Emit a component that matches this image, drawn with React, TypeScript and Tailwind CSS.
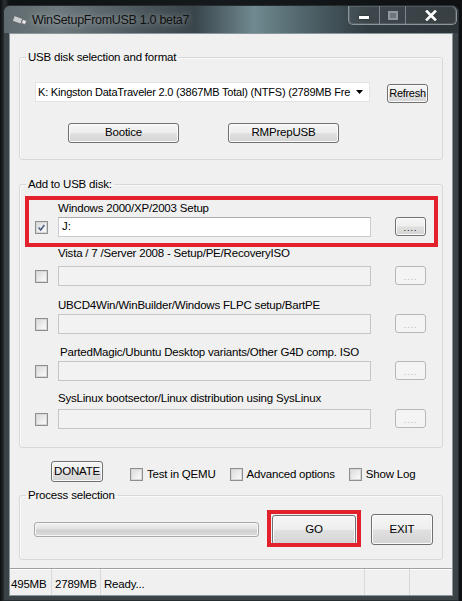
import type { ReactNode } from "react";

const font = { fontFamily: '"Liberation Sans", Arial, sans-serif' };

const entries = [
  { label: "Windows 2000/XP/2003 Setup", value: "J:", on: true, mt: "mt-[10px]", gap: "mt-[2px]", indent: "" },
  { label: "Vista / 7 /Server 2008 - Setup/PE/RecoveryISO", value: "", on: false, mt: "mt-[9px]", gap: "mt-[6px]", indent: "" },
  { label: "UBCD4Win/WinBuilder/Windows FLPC setup/BartPE", value: "", on: false, mt: "mt-[12px]", gap: "mt-[2px]", indent: "" },
  { label: "PartedMagic/Ubuntu Desktop variants/Other G4D comp. ISO", value: "", on: false, mt: "mt-[11px]", gap: "mt-[2px]", indent: "pl-[2px]" },
  { label: "SysLinux bootsector/Linux distribution using SysLinux", value: "", on: false, mt: "mt-[10px]", gap: "mt-[4px]", indent: "" },
];

function Button({ children, className = "" }: { children: ReactNode; className?: string }) {
  return (
    <div
      className={`flex items-center justify-center rounded-[3px] border border-[#707070] bg-[linear-gradient(180deg,#f5f5f5_0%,#eeeeee_48%,#e0e0e0_52%,#d4d4d4_100%)] text-black shadow-[inset_0_0_0_1px_#fbfbfb] ${className}`}
    >
      {children}
    </div>
  );
}

function Checkbox({ checked = false }: { checked?: boolean }) {
  return (
    <div className="flex h-[13px] w-[13px] shrink-0 items-center justify-center border border-[#8e8f8f] bg-white">
      <div className="flex h-[11px] w-[11px] items-center justify-center border border-[#d6d6d6] bg-[linear-gradient(135deg,#dcdcdc,#fafafa)]">
        {checked && (
          <svg width="11" height="11" viewBox="0 0 11 11">
            <path d="M2 5.5 L4.5 8.5 L9 2.5" fill="none" stroke="#4b5d85" strokeWidth="1.8" />
          </svg>
        )}
      </div>
    </div>
  );
}

function Group({ title, children, className = "" }: { title: string; children: ReactNode; className?: string }) {
  return (
    <fieldset className={`rounded-[3px] border border-[#d3d9dd] px-[6px] shadow-[inset_1px_1px_0_#fafafa] ${className}`}>
      <legend className="px-[2px] text-[11.5px] leading-[14px] tracking-[-0.2px]">{title}</legend>
      {children}
    </fieldset>
  );
}

export default function App() {
  return (
    <div
      className="h-[601px] w-[462px] overflow-hidden bg-[linear-gradient(90deg,#0d0f10_0%,#2a3033_1%,#0f1213_2%,#15191b_50%,#0e1011_100%)] pl-[3px] pt-[5px] text-black"
      style={font}
    >
      <div className="flex h-[596px] w-[456px] flex-col overflow-hidden rounded-t-[7px] border border-[#262d31] bg-[#3b4347] shadow-[inset_0_1px_0_rgba(255,255,255,0.35)]">
        {/* title bar */}
        <div className="flex h-[27px] shrink-0 items-start bg-[linear-gradient(90deg,#5f6a6e_0%,#6c787c_12%,#4b575c_30%,#39454a_42%,#6f8a90_55%,#50656b_66%,#313c41_80%,#2c3438_100%)]">
          <div className="ml-[8px] mt-[9px] flex h-[12px] w-[16px] items-center">
            <svg width="16" height="12" viewBox="0 0 16 12">
              <rect x="1" y="2" width="9" height="6" rx="1" transform="rotate(20 6 5)" fill="#c9cdcf" stroke="#5b5f61" strokeWidth="0.8" />
              <rect x="10" y="5" width="4" height="4" transform="rotate(20 12 7)" fill="#e8e8e8" stroke="#6b6f71" strokeWidth="0.6" />
            </svg>
          </div>
          <div className="ml-[4px] mt-[6px] text-[12.5px] leading-[16px] tracking-[-0.3px] text-[#111] [text-shadow:0_0_6px_rgba(255,255,255,0.55)]">
            WinSetupFromUSB 1.0 beta7
          </div>
          <div className="ml-auto mr-[1px] flex h-[19px] overflow-hidden rounded-b-[5px] rounded-tr-[6px] border border-t-0 border-[#8c9599] bg-[rgba(255,255,255,0.06)] shadow-[inset_0_0_0_1px_rgba(255,255,255,0.12)]">
            <div className="flex w-[31px] items-center justify-center border-r border-[#7c8589]">
              <div className="mt-[4px] h-[3px] w-[10px] bg-white shadow-[0_0_2px_#222]" />
            </div>
            <div className="flex w-[26px] items-center justify-center border-r border-[#7c8589]">
              <div className="h-[9px] w-[10px] border-[2px] border-[#8f989c] bg-[#6d777b]" />
            </div>
            <div className="flex w-[50px] items-center justify-center">
              <svg width="12" height="11" viewBox="0 0 12 11">
                <path d="M2 1.5 L10 9.5 M10 1.5 L2 9.5" stroke="#fff" strokeWidth="2.6" strokeLinecap="square" />
              </svg>
            </div>
          </div>
        </div>

        {/* frame body */}
        <div className="flex flex-1 flex-col px-[5px] pb-[4px]">
          <div className="flex flex-1 flex-col border border-[#8a969e] bg-[#f0f0f0] px-[9px]">
            <Group title="USB disk selection and format" className="mt-[16px]">
              <div className="pb-[16px] pl-[9px] pt-[18px]">
                <div className="flex items-start">
                  <div className="flex h-[20px] w-[335px] items-center border border-[#e2e3e4] bg-white pl-[2px]">
                    <div className="whitespace-nowrap text-[11px] tracking-[-0.2px]">
                      K: Kingston DataTraveler 2.0 (3867MB Total) (NTFS) (2789MB Fre
                    </div>
                    <svg className="ml-auto mr-[6px] shrink-0" width="7" height="4" viewBox="0 0 7 4">
                      <path d="M0 0 H7 L3.5 4 Z" fill="#000" />
                    </svg>
                  </div>
                  <Button className="ml-[17px] mt-[2px] h-[19px] w-[41px] text-[11px] tracking-[-0.3px]">Refresh</Button>
                </div>
                <div className="mt-[20px] flex">
                  <Button className="ml-[33px] h-[20px] w-[111px] text-[11.5px] tracking-[-0.2px]">Bootice</Button>
                  <Button className="ml-[49px] h-[20px] w-[111px] text-[11.5px] tracking-[-0.2px]">RMPrepUSB</Button>
                </div>
              </div>
            </Group>

            <Group title="Add to USB disk:" className="mt-[17px]">
              <div className="pb-[18px] pl-[9px]">
                {entries.map((e) => (
                  <div key={e.label} className={`relative ${e.mt}`}>
                    <div className="flex items-end">
                      <div className="mb-[3px]">
                        <Checkbox checked={e.on} />
                      </div>
                      <div className="ml-[10px] flex flex-col">
                        <div className={`text-[11.5px] leading-[14px] tracking-[-0.2px] ${e.indent}`}>{e.label}</div>
                        <div
                          className={`${e.gap} flex h-[20px] w-[313px] items-center border pl-[3px] text-[11.5px] ${
                            e.on ? "border-[#c9ccd0] border-t-[#abadb3] bg-white" : "border-[#c4c6c8] bg-[#f2f2f2]"
                          }`}
                        >
                          {e.value}
                        </div>
                      </div>
                      {e.on ? (
                        <Button className="mb-[1px] ml-[24px] h-[19px] w-[31px] items-end pb-[2px] text-[9px] leading-[9px] tracking-[1px] text-[#555]">
                          ....
                        </Button>
                      ) : (
                        <div className="mb-[1px] ml-[24px] flex h-[19px] w-[31px] items-end justify-center rounded-[3px] border border-[#b4b8bb] bg-[#f4f4f4] pb-[2px] text-[9px] leading-[9px] tracking-[1px] text-[#b5b5b5]">
                          ....
                        </div>
                      )}
                    </div>
                    {e.on && (
                      <div className="pointer-events-none absolute -bottom-[10px] -left-[10px] -right-[2px] -top-[5px] border-[4px] border-[#e2212c]" />
                    )}
                  </div>
                ))}
              </div>
            </Group>

            <div className="mt-[13px] flex items-start text-[11.5px] tracking-[-0.2px]">
              <Button className="ml-[32px] h-[21px] w-[52px]">DONATE</Button>
              <div className="ml-[27px] mt-[7px] flex items-center">
                <Checkbox />
                <span className="ml-[4px] leading-[13px]">Test in QEMU</span>
                <div className="ml-[14px]">
                  <Checkbox />
                </div>
                <span className="ml-[4px] leading-[13px]">Advanced options</span>
                <div className="ml-[14px]">
                  <Checkbox />
                </div>
                <span className="ml-[4px] leading-[13px]">Show Log</span>
              </div>
            </div>

            <Group title="Process selection" className="mt-[6px]">
              <div className="flex items-center pb-[14px] pl-[8px] pt-[12px] text-[11.5px] tracking-[-0.2px]">
                <div className="h-[15px] w-[225px] rounded-[3px] border border-[#a9a9a9] bg-[linear-gradient(180deg,#f2f2f2_0%,#e2e2e2_45%,#cfcfcf_55%,#dcdcdc_100%)] shadow-[inset_0_0_0_1px_#f6f6f6]" />
                <div className="relative ml-[13px]">
                  <Button className="h-[30px] w-[84px]">GO</Button>
                  <div className="pointer-events-none absolute -bottom-[2px] -left-[5px] -right-[5px] -top-[5px] border-[4px] border-[#e2212c]" />
                </div>
                <Button className="ml-[15px] h-[31px] w-[62px]">EXIT</Button>
              </div>
            </Group>

            {/* status bar */}
            <div className="-mx-[9px] mt-auto flex h-[27px] items-stretch border-t border-[#a0a0a0] text-[11.5px] leading-[30px] tracking-[-0.2px] shadow-[inset_0_1px_0_#fff]">
              <div className="w-[41px] pl-[1px]">495MB</div>
              <div className="w-[49px] border-l border-[#d9d9d9] pl-[3px]">2789MB</div>
              <div className="w-[264px] border-l border-[#d9d9d9] pl-[3px]">Ready...</div>
              <div className="w-[45px] border-l border-[#d9d9d9]" />
              <div className="flex-1 border-l border-[#d9d9d9]" />
            </div>
          </div>
        </div>
      </div>
    </div>
  );
}
